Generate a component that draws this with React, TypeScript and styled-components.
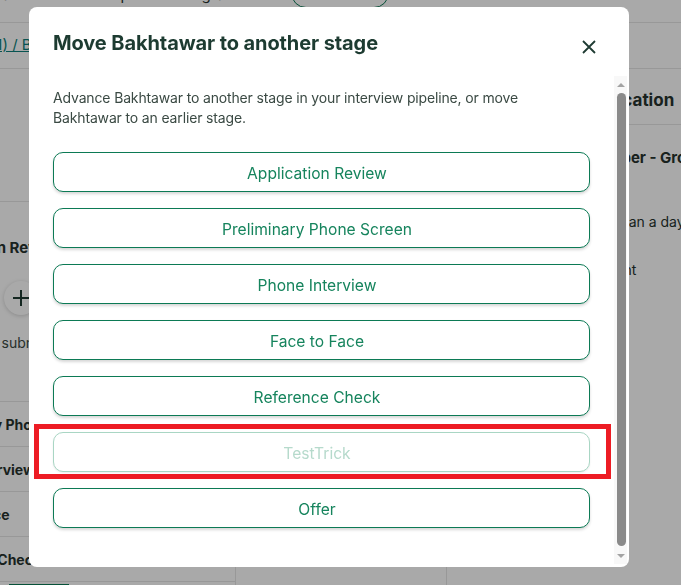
import React from "react";
import styled, { createGlobalStyle } from "styled-components";

const GlobalStyle = createGlobalStyle`
  html, body {
    margin: 0;
    padding: 0;
    width: 681px;
    height: 585px;
    overflow: hidden;
    background: #ffffff;
  }
  body {
    font-family: Inter, "Noto Sans", "Liberation Sans", sans-serif;
    color: #27332e;
  }
  * { box-sizing: border-box; }
`;

/* ---------- background page (dimmed by the overlay) ---------- */

const Page = styled.div`
  width: 1000px;
  margin-left: -140px;
  margin-top: -22px;
  display: flex;
  flex-direction: column;
`;

const TopNav = styled.nav`
  height: 45px;
  flex: none;
  display: flex;
  align-items: flex-start;
  justify-content: space-between;
  border-bottom: 1px solid #e6e6e6;
  padding-left: 92px;
`;

const NavLinks = styled.div`
  display: flex;
  align-items: flex-start;
  gap: 18px;
`;

const NavLink = styled.span`
  font-size: 15px;
  line-height: 20px;
  padding-top: 7px;
  color: #27332e;
`;

const AddButton = styled.span`
  margin-left: 14px;
  width: 98px;
  height: 30px;
  border: 1.5px solid #0c7a55;
  border-radius: 15px;
  color: #0c7a55;
  font-size: 15px;
  display: flex;
  align-items: center;
  justify-content: center;
`;

const NavRightButton = styled.span`
  width: 108px;
  height: 35px;
  border: 1px solid #cfcfcf;
  border-radius: 6px;
`;

const Breadcrumb = styled.div`
  height: 46px;
  flex: none;
  display: flex;
  align-items: center;
  padding: 0 0 3px 92px;
  border-bottom: 1px solid #e6e6e6;
`;

const CrumbLink = styled.a`
  font-size: 15px;
  color: #0d7f7a;
  text-decoration: underline;
`;

const Main = styled.div`
  display: grid;
  grid-template-columns: 376px 210px 1fr;
  height: 560px;
`;

const LeftColumn = styled.div`
  display: flex;
  flex-direction: column;
  border-right: 1px solid #e6e6e6;
`;

const LeftTopSection = styled.div`
  height: 133px;
  border-bottom: 1px solid #e6e6e6;
`;

const CurrentStage = styled.div`
  height: 200px;
  padding: 36px 0 0 62px;
  border-bottom: 1px solid #e6e6e6;
`;

const StageHeading = styled.div`
  font-size: 15px;
  line-height: 20px;
  font-weight: 700;
`;

const ReviewerRow = styled.div`
  margin-top: 23px;
  display: flex;
  align-items: center;
  gap: 14px;
  font-size: 14px;
`;

const PlusCircle = styled.span`
  width: 34px;
  height: 34px;
  border-radius: 50%;
  background: #ffffff;
  box-shadow: 0 1px 4px rgba(0, 0, 0, 0.18);
  display: flex;
  align-items: center;
  justify-content: center;
  color: #1f3b33;
`;

const SubmittedText = styled.div`
  margin-top: 18px;
  font-size: 14px;
  line-height: 20px;
  color: #3b4a44;
`;

const StageRow = styled.div`
  height: 45px;
  flex: none;
  display: flex;
  align-items: center;
  padding-left: 64px;
  border-bottom: 1px solid #e6e6e6;
  font-size: 14px;
  font-weight: 700;
`;

const BottomBar = styled.div`
  padding-left: 149px;
`;

const GreenButton = styled.span`
  display: inline-flex;
  width: 60px;
  height: 30px;
  background: #0c7a55;
  color: #fff;
  font-size: 13px;
  justify-content: center;
  padding-top: 1px;
`;

const MiddleColumn = styled.div`
  display: flex;
  flex-direction: column;
  justify-content: flex-end;
`;

const MiddleFooter = styled.div`
  height: 5px;
  border-top: 1px solid #e6e6e6;
  margin-right: 55px;
`;

const RightColumn = styled.div`
  display: flex;
  flex-direction: column;
  border-left: 1px solid #e6e6e6;
`;

const RightHeader = styled.div`
  height: 56px;
  flex: none;
  display: flex;
  align-items: center;
  padding: 7px 0 0 132px;
  border-bottom: 1px solid #e6e6e6;
  font-size: 17px;
  font-weight: 700;
  white-space: nowrap;
`;

const RightBlock = styled.div<{ $top: number; $bold?: boolean; $indent: number }>`
  margin-top: ${(p) => p.$top}px;
  padding-left: ${(p) => p.$indent}px;
  font-size: ${(p) => (p.$bold ? 15 : 14)}px;
  font-weight: ${(p) => (p.$bold ? 700 : 400)};
  line-height: 20px;
  white-space: nowrap;
`;

/* ---------- modal ---------- */

const Overlay = styled.div`
  position: fixed;
  inset: 0;
  background: rgba(0, 0, 0, 0.337);
  display: flex;
  align-items: flex-start;
  padding: 7px 0 0 29px;
`;

const Modal = styled.div`
  width: 600px;
  height: 560px;
  background: #ffffff;
  border-radius: 8px;
  display: flex;
  flex-direction: column;
  overflow: hidden;
`;

const Header = styled.div`
  height: 69px;
  flex: none;
  display: flex;
  justify-content: space-between;
  align-items: flex-start;
  padding: 23px 28px 0 24px;
`;

const Title = styled.h2`
  margin: 0;
  font-size: 20px;
  line-height: 26px;
  font-weight: 700;
  color: #1d3b31;
  letter-spacing: -0.1px;
`;

const CloseButton = styled.button`
  width: 24px;
  height: 24px;
  margin-top: 5px;
  border: 0;
  padding: 0;
  background: none;
  color: #1f3b33;
  display: flex;
  align-items: center;
  justify-content: center;
  cursor: pointer;
`;

const BodyRow = styled.div`
  flex: 1;
  min-height: 0;
  display: flex;
  margin: 0 2px 3px 0;
`;

const Body = styled.div`
  flex: 1;
  min-width: 0;
  overflow: hidden;
  padding: 12px 24px 46px 24px;
`;

const ScrollTrack = styled.div`
  width: 13px;
  flex: none;
  display: flex;
  flex-direction: column;
  background: #f8f8f8;
`;

const ScrollArrow = styled.span<{ $down?: boolean }>`
  height: 15px;
  flex: none;
  display: flex;
  align-items: center;
  justify-content: center;
  &::before {
    content: "";
    width: 0;
    height: 0;
    border-left: 4px solid transparent;
    border-right: 4px solid transparent;
    ${(p) =>
      p.$down
        ? "border-top: 4px solid #a3a3a3; margin-top: -1px;"
        : "border-bottom: 4px solid #a3a3a3; margin-top: 2px;"}
  }
`;

const ScrollThumb = styled.span`
  flex: 1;
  margin: 2px 1px 3px 3px;
  border-radius: 5px;
  background: #8a8a8a;
`;

const Description = styled.p`
  margin: 0 0 24px;
  max-width: 530px;
  font-size: 14px;
  line-height: 20px;
  letter-spacing: -0.15px;
  color: #3b4a44;
`;

const StageList = styled.div`
  display: flex;
  flex-direction: column;
  gap: 16px;
`;

const StageItem = styled.div`
  position: relative;
`;

const StageButton = styled.button<{ $disabled?: boolean }>`
  width: 100%;
  height: 40px;
  padding: 3px 9px 0 0;
  border-radius: 10px;
  border: 1px solid ${(p) => (p.$disabled ? "#a9d6c4" : "#0c7a55")};
  background: #ffffff;
  color: ${(p) => (p.$disabled ? "#b6dacc" : "#16845d")};
  font-family: Inter, "Noto Sans", sans-serif;
  font-size: 15.6px;
  box-shadow: ${(p) =>
    p.$disabled ? "0 1px 2px rgba(0,0,0,0.08)" : "0 2px 3px rgba(0,0,0,0.16)"};
  cursor: ${(p) => (p.$disabled ? "default" : "pointer")};
`;

const Highlight = styled.span`
  position: absolute;
  top: -8px;
  left: -19px;
  right: -21px;
  bottom: -7px;
  border: 5px solid #ed1c24;
  pointer-events: none;
`;

const stages = [
  "Application Review",
  "Preliminary Phone Screen",
  "Phone Interview",
  "Face to Face",
  "Reference Check",
  "TestTrick",
  "Offer",
];

export default function App() {
  return (
    <>
      <GlobalStyle />
      <Page>
        <TopNav>
          <NavLinks>
            <NavLink>Candidates</NavLink>
            <NavLink>CRM</NavLink>
            <NavLink>Reports</NavLink>
            <NavLink>Integrations</NavLink>
            <AddButton>Add</AddButton>
          </NavLinks>
          <NavRightButton />
        </TopNav>
        <Breadcrumb>
          <CrumbLink>Jobs (1) / Bakhtawar</CrumbLink>
        </Breadcrumb>
        <Main>
          <LeftColumn>
            <LeftTopSection />
            <CurrentStage>
              <StageHeading>Application Review</StageHeading>
              <ReviewerRow>
                <span>Reviewers</span>
                <PlusCircle>
                  <svg width="20" height="20" viewBox="0 0 20 20">
                    <path d="M10 2v16M2 10h16" stroke="currentColor" strokeWidth="2" />
                  </svg>
                </PlusCircle>
              </ReviewerRow>
              <SubmittedText>Scorecards submitted</SubmittedText>
            </CurrentStage>
            <StageRow>Preliminary Phone Screen</StageRow>
            <StageRow>Phone Interview</StageRow>
            <StageRow>Face to Face</StageRow>
            <StageRow>Reference Check</StageRow>
            <BottomBar>
              <GreenButton>Move</GreenButton>
            </BottomBar>
          </LeftColumn>
          <MiddleColumn>
            <MiddleFooter />
          </MiddleColumn>
          <RightColumn>
            <RightHeader>Application</RightHeader>
            <RightBlock $top={23} $bold $indent={124}>
              Developer - Growth
            </RightBlock>
            <RightBlock $top={44} $indent={134}>
              Less than a day
            </RightBlock>
            <RightBlock $top={28} $indent={134}>
              Consent
            </RightBlock>
          </RightColumn>
        </Main>
      </Page>

      <Overlay>
        <Modal role="dialog" aria-labelledby="move-title">
          <Header>
            <Title id="move-title">Move Bakhtawar to another stage</Title>
            <CloseButton aria-label="Close">
              <svg width="14" height="14" viewBox="0 0 14 14">
                <path d="M1 1L13 13M13 1L1 13" stroke="currentColor" strokeWidth="1.8" />
              </svg>
            </CloseButton>
          </Header>
          <BodyRow>
            <Body>
              <Description>
                Advance Bakhtawar to another stage in your interview pipeline, or move
                Bakhtawar to an earlier stage.
              </Description>
              <StageList>
                {stages.map((s) => (
                  <StageItem key={s}>
                    <StageButton $disabled={s === "TestTrick"} disabled={s === "TestTrick"}>
                      {s}
                    </StageButton>
                    {s === "TestTrick" && <Highlight />}
                  </StageItem>
                ))}
              </StageList>
            </Body>
            <ScrollTrack aria-hidden="true">
              <ScrollArrow />
              <ScrollThumb />
              <ScrollArrow $down />
            </ScrollTrack>
          </BodyRow>
        </Modal>
      </Overlay>
    </>
  );
}
